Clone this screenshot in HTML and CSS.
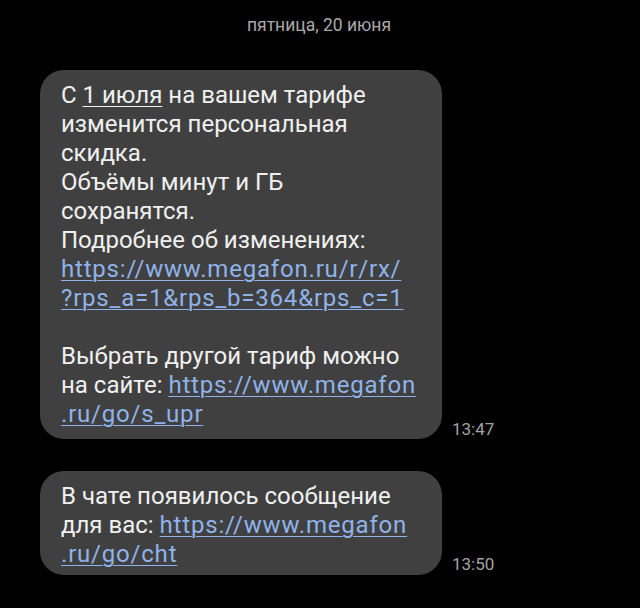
FILE: index.html
```html
<!DOCTYPE html>
<html lang="ru">
<head>
<meta charset="utf-8">
<link rel="stylesheet" href="styles.css">
</head>
<body>
<div class="chat">
  <div class="date">пятница, 20 июня</div>
  <div class="row first">
    <div class="bubble">С <span class="u">1 июля</span> на вашем тарифе<br>изменится персональная<br>скидка.<br>Объёмы минут и ГБ<br>сохранятся.<br>Подробнее об изменениях:<br><a class="link">https://www.megafon.ru/r/rx/</a><br><a class="link">?rps_a=1&amp;rps_b=364&amp;rps_c=1</a><br><br>Выбрать другой тариф можно<br>на сайте: <a class="link">https://www.megafon</a><br><a class="link">.ru/go/s_upr</a></div>
    <div class="time">13:47</div>
  </div>
  <div class="row second">
    <div class="bubble">В чате появилось сообщение<br>для вас: <a class="link">https://www.megafon</a><br><a class="link">.ru/go/cht</a></div>
    <div class="time">13:50</div>
  </div>
</div>
</body>
</html>
```
FILE: styles.css
```css
html, body {
  margin: 0;
  padding: 0;
  background: #000;
}
body {
  width: 640px;
  height: 608px;
  overflow: hidden;
  font-family: Roboto, "Noto Sans", sans-serif;
}
.chat {
  display: flex;
  flex-direction: column;
  padding-top: 15px;
}
.date {
  text-align: center;
  color: #a9a9a9;
  font-size: 17.5px;
  line-height: 20px;
  margin-left: -2px;
}
.row {
  display: flex;
  align-items: flex-end;
  padding-left: 40px;
}
.first {
  margin-top: 35px;
}
.second {
  margin-top: 32px;
}
.bubble {
  width: 402px;
  box-sizing: border-box;
  background: #404040;
  border-radius: 24px;
  padding: 11px 10px 10px 21px;
  color: #f0f0f0;
  font-size: 24px;
  line-height: 29px;
}
.second .bubble {
  padding-bottom: 6px;
}
.u {
  text-decoration: underline;
  text-underline-offset: 3px;
  text-decoration-thickness: 1px;
}
.link {
  color: #8fb3ea;
  letter-spacing: 0.8px;
  text-decoration: underline;
  text-underline-offset: 3px;
  text-decoration-thickness: 1px;
}
.time {
  color: #a3a3a3;
  font-size: 17px;
  line-height: 20px;
  margin-left: 10px;
  padding-bottom: 0;
}
.second .time {
  padding-bottom: 1px;
}
```
